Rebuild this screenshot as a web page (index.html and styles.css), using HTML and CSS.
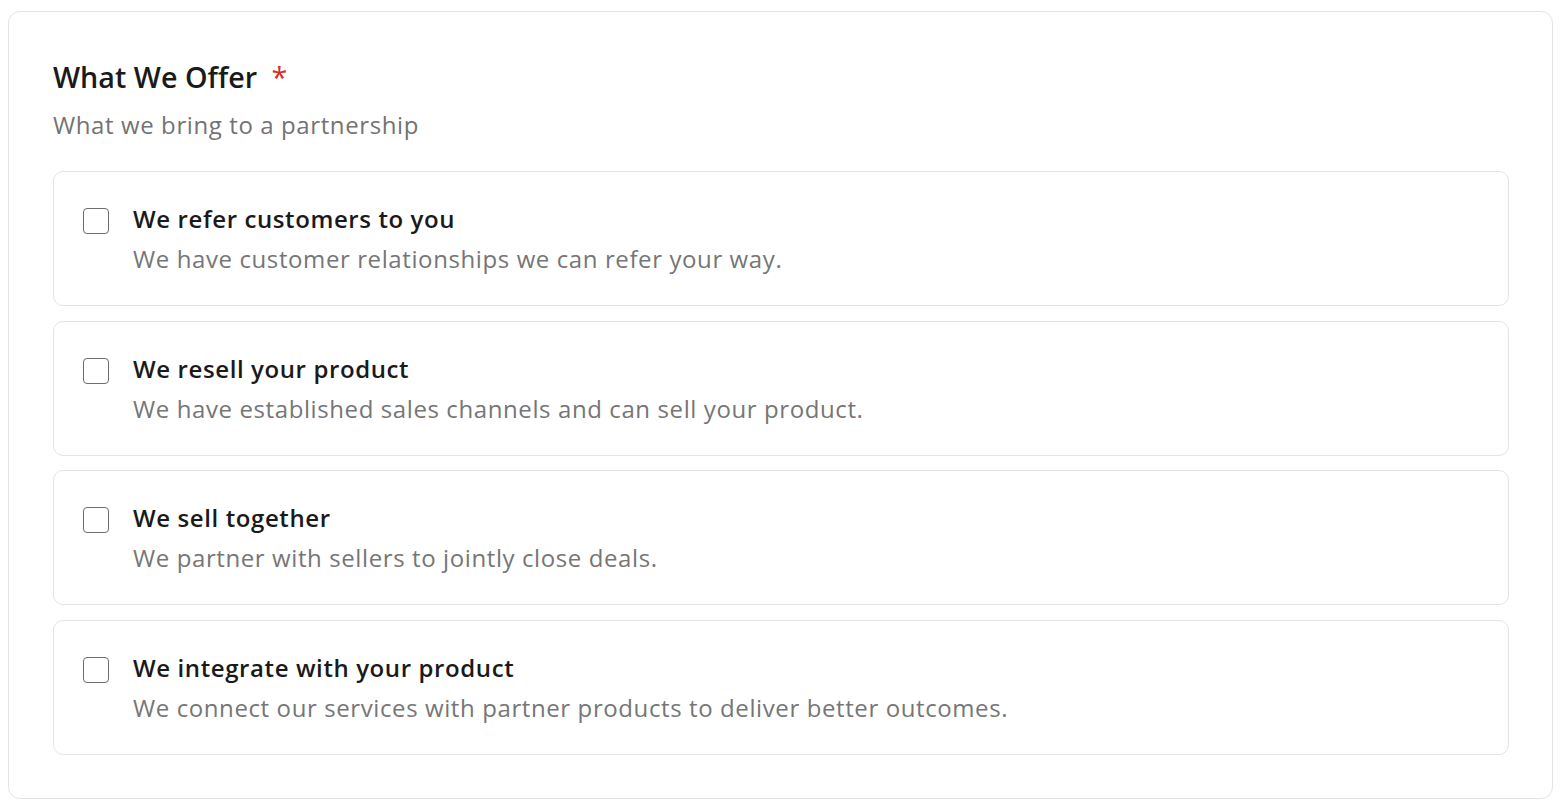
FILE: index.html
```html
<!DOCTYPE html>
<html lang="en">
<head>
    <meta charset="UTF-8">
    <meta name="viewport" content="width=device-width, initial-scale=1.0">
    <title>What We Offer</title>
    <link rel="stylesheet" href="styles.css">
</head>
<body>
    <div class="panel">
        <!-- Field header -->
        <h2 class="field-title">What We Offer <span class="required">*</span></h2>
        <p class="field-hint">What we bring to a partnership</p>

        <!-- Options -->
        <div class="options">
            <label class="option">
                <input type="checkbox" class="check">
                <span class="option-text">
                    <span class="option-title">We refer customers to you</span>
                    <span class="option-desc">We have customer relationships we can refer your way.</span>
                </span>
            </label>
            <label class="option">
                <input type="checkbox" class="check">
                <span class="option-text">
                    <span class="option-title">We resell your product</span>
                    <span class="option-desc">We have established sales channels and can sell your product.</span>
                </span>
            </label>
            <label class="option">
                <input type="checkbox" class="check">
                <span class="option-text">
                    <span class="option-title">We sell together</span>
                    <span class="option-desc">We partner with sellers to jointly close deals.</span>
                </span>
            </label>
            <label class="option">
                <input type="checkbox" class="check">
                <span class="option-text">
                    <span class="option-title">We integrate with your product</span>
                    <span class="option-desc">We connect our services with partner products to deliver better outcomes.</span>
                </span>
            </label>
        </div>
    </div>
</body>
</html>
```

FILE: styles.css
```css
* {
    margin: 0;
    padding: 0;
    box-sizing: border-box;
}

body {
    font-family: 'Open Sans', 'Liberation Sans', sans-serif;
    background: #fff;
    color: #1a1a1a;
    padding: 11px 13px 9px 8px;
}

.panel {
    border: 1px solid #e4e4e4;
    border-radius: 12px;
    padding: 47px 43px 43px 44px;
    background: #fff;
}

.field-title {
    font-size: 28.7px;
    font-weight: 600;
    line-height: 36px;
    color: #1a1a1a;
}

.required {
    color: #d92b2b;
    font-weight: 400;
    margin-left: 7px;
}

.field-hint {
    margin-top: 14px;
    font-size: 24px;
    letter-spacing: 0.6px;
    line-height: 32px;
    color: #737373;
}

.options {
    margin-top: 30px;
    display: flex;
    flex-direction: column;
    gap: 14.5px;
}

.option {
    display: flex;
    align-items: flex-start;
    gap: 24px;
    border: 1px solid #e4e4e4;
    border-radius: 10px;
    padding: 31px 29px 30px;
    cursor: pointer;
}

.check {
    appearance: none;
    -webkit-appearance: none;
    flex: none;
    width: 26px;
    height: 26px;
    margin-top: 5px;
    border: 1.5px solid #6e6e6e;
    border-radius: 4px;
    background: #fff;
    cursor: pointer;
}

.option-text {
    display: flex;
    flex-direction: column;
    gap: 8px;
}

.option-title {
    font-size: 24px;
    font-weight: 600;
    letter-spacing: 0.6px;
    line-height: 32px;
    color: #1a1a1a;
}

.option-desc {
    font-size: 24px;
    letter-spacing: 0.6px;
    line-height: 32px;
    color: #767676;
}
```
